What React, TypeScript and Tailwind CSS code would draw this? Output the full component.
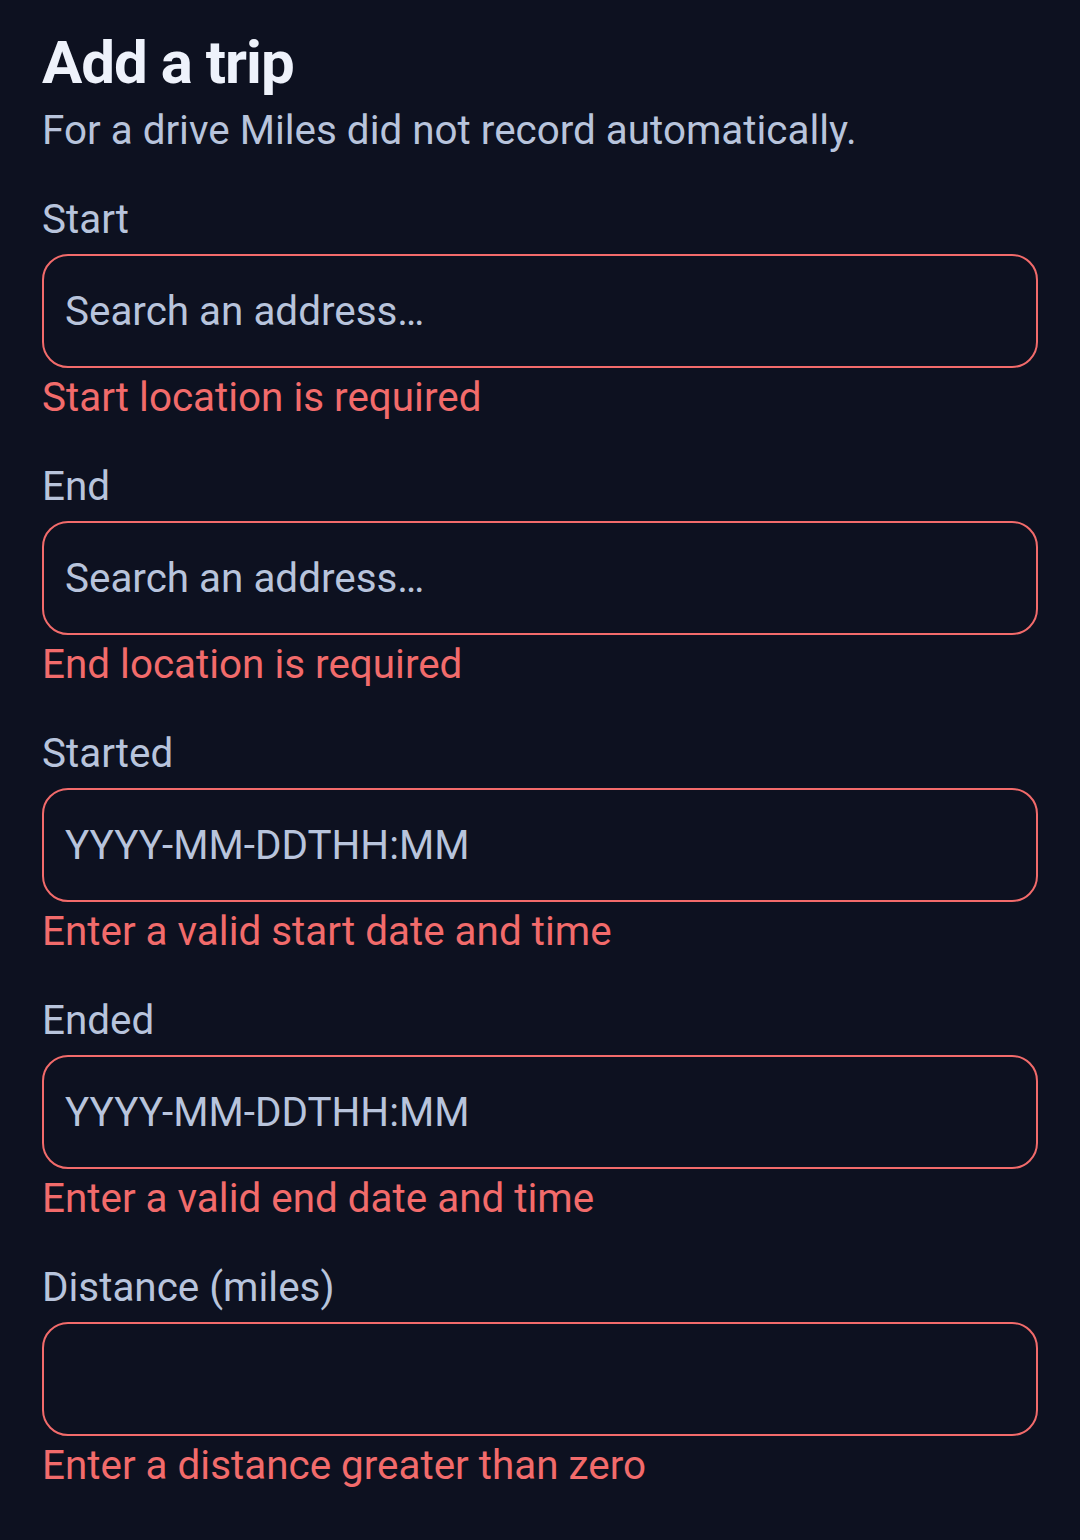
import React from "react";

type Field = { label: string; placeholder: string; error: string };

const fields: Field[] = [
  { label: "Start", placeholder: "Search an address…", error: "Start location is required" },
  { label: "End", placeholder: "Search an address…", error: "End location is required" },
  { label: "Started", placeholder: "YYYY-MM-DDTHH:MM", error: "Enter a valid start date and time" },
  { label: "Ended", placeholder: "YYYY-MM-DDTHH:MM", error: "Enter a valid end date and time" },
  { label: "Distance (miles)", placeholder: "", error: "Enter a distance greater than zero" },
];

export default function App() {
  return (
    <div
      className="min-h-[1540px] w-full bg-[#0d1120] px-[42px] pt-[27px] overflow-hidden"
      style={{ fontFamily: "Roboto, 'Noto Sans', 'Liberation Sans', sans-serif" }}
    >
      <h1 className="text-[60px] leading-[72px] font-bold text-[#eef2fb] tracking-[-1px]">Add a trip</h1>
      <p className="mt-[7px] text-[40.4px] leading-[50px] text-[#b8c4dc]">
        For a drive Miles did not record automatically.
      </p>
      <div className="mt-[39px] flex flex-col gap-[39px]">
        {fields.map((f) => (
          <div key={f.label} className="flex flex-col">
            <label className="text-[40.4px] leading-[50px] text-[#b8c4dc]">{f.label}</label>
            <input
              type="text"
              placeholder={f.placeholder}
              className="mt-[9px] h-[114px] w-full rounded-[26px] border-2 border-[#f26b6b] bg-[#0d1120] pl-[21px] text-[40.4px] text-[#b8c4dc] placeholder:text-[#b8c4dc] outline-none"
            />
            <span className="mt-[5px] text-[40.4px] leading-[50px] text-[#f26b6b]">{f.error}</span>
          </div>
        ))}
        <div className="mt-[14px] flex flex-col">
          <label className="text-[40.4px] leading-[50px] text-[#b8c4dc]">Classification</label>
        </div>
      </div>
    </div>
  );
}
